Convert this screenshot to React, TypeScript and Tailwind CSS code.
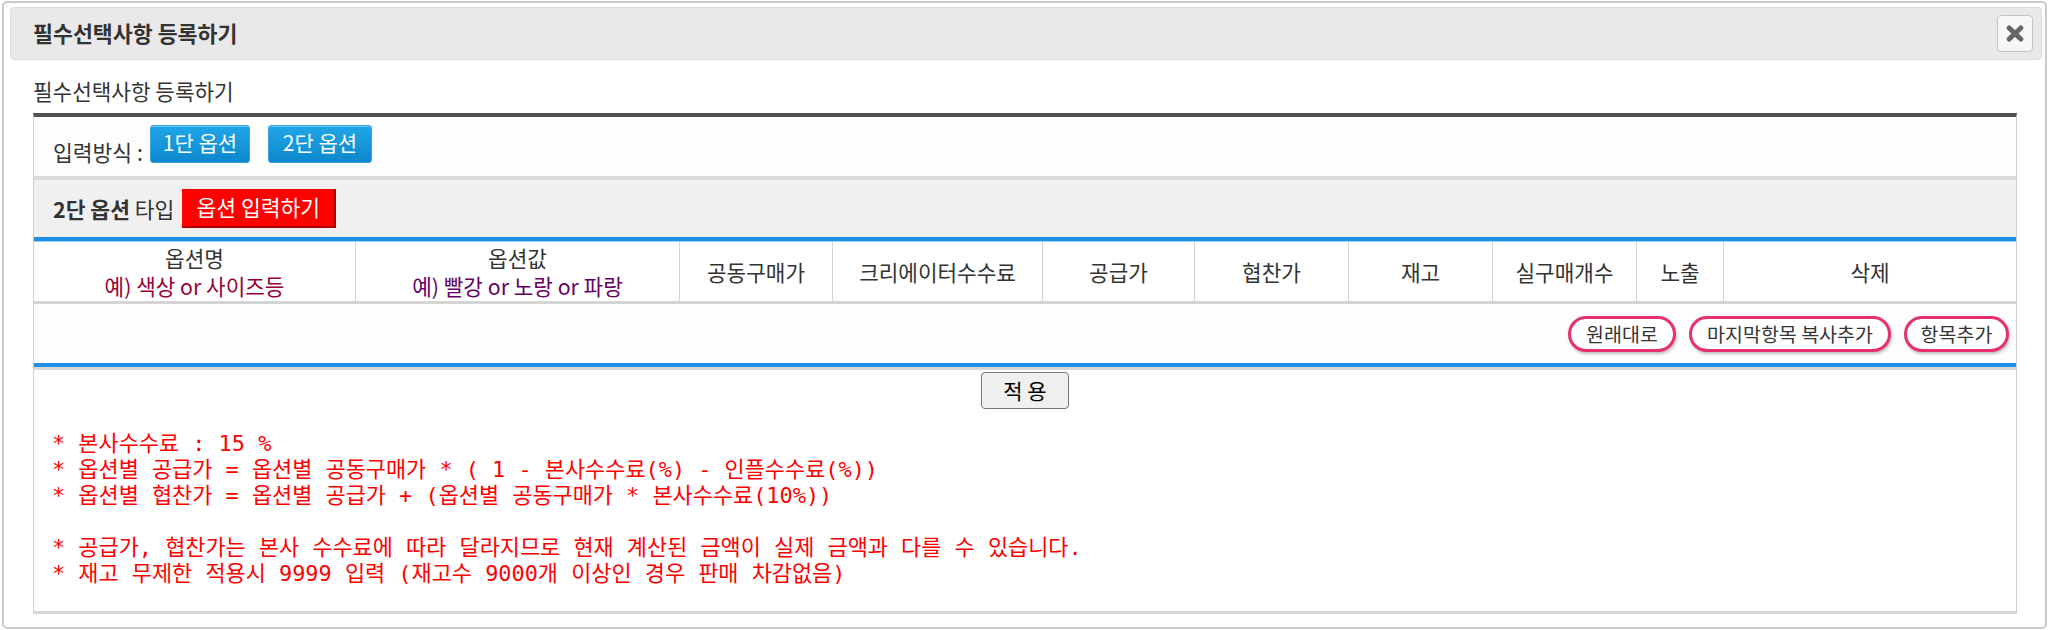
import React from "react";

const columns = [
  { w: "w-[322px]", title: "옵션명", hint: "예) 색상 or 사이즈등", hintColor: "text-[#990033]" },
  { w: "w-[324px]", title: "옵션값", hint: "예) 빨강 or 노랑 or 파랑", hintColor: "text-[#660066]" },
  { w: "w-[153px]", title: "공동구매가" },
  { w: "w-[210px]", title: "크리에이터수수료" },
  { w: "w-[152px]", title: "공급가" },
  { w: "w-[154px]", title: "협찬가" },
  { w: "w-[144px]", title: "재고" },
  { w: "w-[144px]", title: "실구매개수" },
  { w: "w-[87px]", title: "노출" },
  { w: "w-[292px]", title: "삭제" },
];

const notes = [
  "* 본사수수료 : 15 %",
  "* 옵션별 공급가 = 옵션별 공동구매가 * ( 1 - 본사수수료(%) - 인플수수료(%))",
  "* 옵션별 협찬가 = 옵션별 공급가 + (옵션별 공동구매가 * 본사수수료(10%))",
  "",
  "* 공급가, 협찬가는 본사 수수료에 따라 달라지므로 현재 계산된 금액이 실제 금액과 다를 수 있습니다.",
  "* 재고 무제한 적용시 9999 입력 (재고수 9000개 이상인 경우 판매 차감없음)",
];

function BlueButton({ w, children }: { w: string; children: React.ReactNode }) {
  return (
    <button
      className={`${w} h-[38px] rounded-[3px] border border-[#3aa2e3] bg-gradient-to-b from-[#20a6e8] to-[#0c88cc] text-white text-[21px] leading-none pb-[3px] shadow-[inset_0_1px_0_rgba(255,255,255,0.35)]`}
    >
      {children}
    </button>
  );
}

function PinkButton({ w, children }: { w: string; children: React.ReactNode }) {
  return (
    <button
      className={`${w} h-[36px] rounded-full border-[3px] border-[#e8306d] bg-white text-[19.5px] leading-none text-[#333] shadow-[1px_2px_3px_rgba(0,0,0,0.25)]`}
    >
      {children}
    </button>
  );
}

export default function App() {
  return (
    <div className="w-[2048px] h-[630px] bg-white pt-[1px] pl-[2px] font-['Noto_Sans_CJK_KR',sans-serif] text-[#333]">
      <div className="w-[2045px] h-[628px] border-2 border-[#cbcbcb] rounded-[5px] bg-white">
        {/* title bar */}
        <div className="mt-[4px] ml-[6px] mr-[3px] h-[53px] flex items-center justify-between rounded-[4px] border border-[#dddddd] bg-[#e9e9e9] pl-[22px] pr-[8px]">
          <span className="text-[21.7px] font-bold text-[#333]">필수선택사항 등록하기</span>
          <button className="w-[36px] h-[37px] flex items-center justify-center rounded-[4px] border border-[#c5c5c5] bg-[#f6f6f6]">
            <svg width="18" height="17" viewBox="0 0 18 17">
              <path d="M3.2 3 L14.8 14 M14.8 3 L3.2 14" stroke="#656565" strokeWidth="5" strokeLinecap="round" />
            </svg>
          </button>
        </div>

        <div className="px-[29px]">
          <div className="pt-[19px] pb-[10px] text-[21.3px] leading-[24px]">필수선택사항 등록하기</div>

          {/* inner box */}
          <div className="w-[1984px] border-x border-[#d0d0d0] border-t-[4px] border-t-[#505050] border-b-[3px] border-b-[#d6d6d6]">
            {/* input method */}
            <div className="h-[59px] flex items-end pb-[13px] pl-[19px] bg-[#fdfdfd]">
              <span className="text-[21.5px] leading-[24px] mr-[7px] mb-[-1px]">입력방식 :</span>
              <div className="flex gap-[18px]">
                <BlueButton w="w-[100px]">1단 옵션</BlueButton>
                <BlueButton w="w-[104px]">2단 옵션</BlueButton>
              </div>
            </div>
            <div className="h-[4px] bg-[#dadada]" />

            {/* option type */}
            <div className="h-[57px] flex items-center pl-[19px] bg-[#f0f0f0]">
              <span className="text-[21.5px] leading-[24px]">
                <b>2단 옵션</b> 타입
              </span>
              <button className="ml-[8px] w-[154px] h-[39px] bg-[#ff0000] border-r-2 border-b-2 border-[#b30000] text-white text-[21.5px] leading-none pb-[2px]">
                옵션 입력하기
              </button>
            </div>
            <div className="h-[4px] bg-[#1e8fe6]" />
            <div className="h-[1px] bg-[#9fd0f5]" />

            {/* table header */}
            <div className="flex h-[59px] bg-white">
              {columns.map((c, i) => (
                <div
                  key={c.title}
                  className={`${c.w} flex flex-col items-center justify-center text-[21.3px] leading-[28px] ${
                    i < columns.length - 1 ? "border-r border-[#d5d5d5]" : ""
                  }`}
                >
                  <span>{c.title}</span>
                  {c.hint && <span className={c.hintColor}>{c.hint}</span>}
                </div>
              ))}
            </div>
            <div className="h-[3px] bg-[#d4d4d4]" />

            {/* row actions */}
            <div className="h-[59px] flex items-center justify-end gap-[13px] pr-[7px] bg-[#fdfdfd]">
              <PinkButton w="w-[108px]">원래대로</PinkButton>
              <PinkButton w="w-[202px]">마지막항목 복사추가</PinkButton>
              <PinkButton w="w-[105px]">항목추가</PinkButton>
            </div>
            <div className="h-[4px] bg-[#1e8fe6]" />
            <div className="h-[3px] bg-[#d8d8d8]" />

            {/* apply + notes */}
            <div className="h-[241px] bg-white">
              <div className="flex justify-center pt-[2px]">
                <button className="w-[88px] h-[37px] rounded-[4px] border border-[#767676] bg-[#efefef] text-[21px] leading-none text-black">
                  적 용
                </button>
              </div>
              <div className="mt-[22px] pl-[18px] font-['DejaVu_Sans_Mono','Noto_Sans_CJK_KR',monospace] text-[21.9px] leading-[26px] text-[#ff0000] whitespace-pre">
                {notes.map((n, i) => (
                  <div key={i} className="h-[26px]">
                    {n}
                  </div>
                ))}
              </div>
            </div>
          </div>
        </div>
      </div>
    </div>
  );
}
